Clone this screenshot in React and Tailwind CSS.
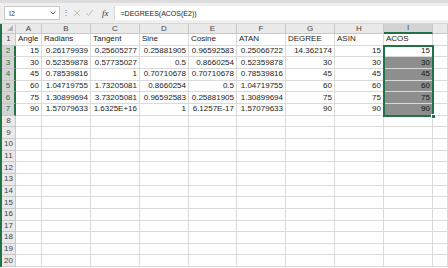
import React from 'react';

const cols = [
  { key: 'A', w: 'w-[26px]' },
  { key: 'B', w: 'w-[49px]' },
  { key: 'C', w: 'w-[49px]' },
  { key: 'D', w: 'w-[49px]' },
  { key: 'E', w: 'w-[48px]' },
  { key: 'F', w: 'w-[49px]' },
  { key: 'G', w: 'w-[49px]' },
  { key: 'H', w: 'w-[49px]' },
  { key: 'I', w: 'w-[49px]' },
  { key: '', w: 'w-[15px]' },
];

const data = [
  ['Angle', 'Radians', 'Tangent', 'Sine', 'Cosine', 'ATAN', 'DEGREE', 'ASIN', 'ACOS'],
  [15, '0.26179939', '0.25605277', '0.25881905', '0.96592583', '0.25066722', '14.362174', 15, 15],
  [30, '0.52359878', '0.57735027', '0.5', '0.8660254', '0.52359878', 30, 30, 30],
  [45, '0.78539816', 1, '0.70710678', '0.70710678', '0.78539816', 45, 45, 45],
  [60, '1.04719755', '1.73205081', '0.8660254', '0.5', '1.04719755', 60, 60, 60],
  [75, '1.30899694', '3.73205081', '0.96592583', '0.25881905', '1.30899694', 75, 75, 75],
  [90, '1.57079633', '1.6325E+16', 1, '6.1257E-17', '1.57079633', 90, 90, 90],
];

const rows = Array.from({ length: 20 }, (_, i) => i + 1);

function Cell({ w, value, row, colIndex }) {
  const isNum = row > 1 && value !== undefined;
  const selected = colIndex === 8 && row >= 3 && row <= 7;
  return (
    <div
      className={`${w} shrink-0 h-full border-r border-b border-[#dadada] px-[2px] flex items-center overflow-hidden whitespace-nowrap ${
        isNum ? 'justify-end' : 'justify-start'
      } ${selected ? 'bg-[#8e8e8e] text-[#111]' : 'text-[#1a1a1a]'}`}
    >
      {value}
    </div>
  );
}

export default function App() {
  return (
    <div className="w-[448px] h-[268px] overflow-hidden bg-white text-[8px] leading-none relative" style={{ fontFamily: '"Liberation Sans", Arial, sans-serif' }}>
      {/* formula bar */}
      <div className="h-[24px] bg-[#efefef] border-t-[3px] border-[#dcdcdc] flex items-center pl-[4px] border-b border-b-[#d6d6d6]">
        <div className="w-[56px] h-[14px] bg-white border border-[#c8c8c8] flex items-center justify-between pl-[4px] pr-[3px] text-[#333] text-[7px]">
          <span>I2</span>
          <svg width="6" height="4" viewBox="0 0 6 4"><path d="M0.5 0.5 L3 3 L5.5 0.5" fill="none" stroke="#555" strokeWidth="1" /></svg>
        </div>
        <div className="w-[12px] flex justify-center text-[#777] text-[8px]">⋮</div>
        <div className="flex items-center gap-[4px] ml-[1px]">
          <svg width="8" height="8" viewBox="0 0 8 8"><path d="M1 1 L7 7 M7 1 L1 7" stroke="#bdbdbd" strokeWidth="1" /></svg>
          <svg width="9" height="8" viewBox="0 0 9 8"><path d="M1 4 L3.5 6.5 L8 1" fill="none" stroke="#bdbdbd" strokeWidth="1" /></svg>
          <span className="italic text-[#333] text-[9px] ml-[4px]" style={{ fontFamily: '"Liberation Serif", serif' }}>fx</span>
        </div>
        <div className="flex-1 h-[14px] ml-[5px] bg-white border-l border-[#d6d6d6] flex items-center pl-[6px] text-[7px] text-[#222]">
          =DEGREES(ACOS(E2))
        </div>
      </div>

      {/* grid */}
      <div className="flex">
        <div className="w-[2px] shrink-0 bg-[#217346]" />
        <div className="flex-1">
          {/* column header */}
          <div className="flex h-[10px] bg-[#e9e9e9]">
            <div className="w-[14px] shrink-0 h-full border-r border-b border-[#c8c8c8] relative">
              <div className="absolute right-[2px] bottom-[2px] w-0 h-0 border-l-[6px] border-l-transparent border-b-[6px] border-b-[#b5b5b5]" />
            </div>
            {cols.map((c, i) => (
              <div
                key={i}
                className={`${c.w} shrink-0 h-full border-r flex items-center justify-center ${
                  c.key === 'I'
                    ? 'bg-[#d3d3d3] border-b-2 border-b-[#217346] border-r-[#c8c8c8] text-[#1d5c3a]'
                    : 'border-b border-[#c8c8c8] text-[#444]'
                }`}
              >
                {c.key}
              </div>
            ))}
          </div>
          {rows.map((r) => {
            const hl = r >= 2 && r <= 7;
            return (
              <div key={r} className="flex h-[11.67px]">
                <div
                  className={`w-[14px] shrink-0 h-full flex items-center justify-center border-b ${
                    hl
                      ? 'bg-[#d3d3d3] text-[#217346] border-r-2 border-r-[#217346] border-b-[#c4c4c4]'
                      : 'bg-[#e9e9e9] text-[#444] border-r border-[#c8c8c8]'
                  }`}
                >
                  {r}
                </div>
                {cols.map((c, ci) => (
                  <Cell key={ci} w={c.w} value={data[r - 1] ? data[r - 1][ci] : undefined} row={r} colIndex={ci} />
                ))}
              </div>
            );
          })}
        </div>
      </div>

      {/* selection outline I2:I7 */}
      <div className="absolute left-[383px] top-[45px] w-[51px] h-[72px] border-2 border-[#217346] pointer-events-none" />
      <div className="absolute left-[431px] top-[114px] w-[5px] h-[5px] bg-[#217346] border border-white" />
    </div>
  );
}
